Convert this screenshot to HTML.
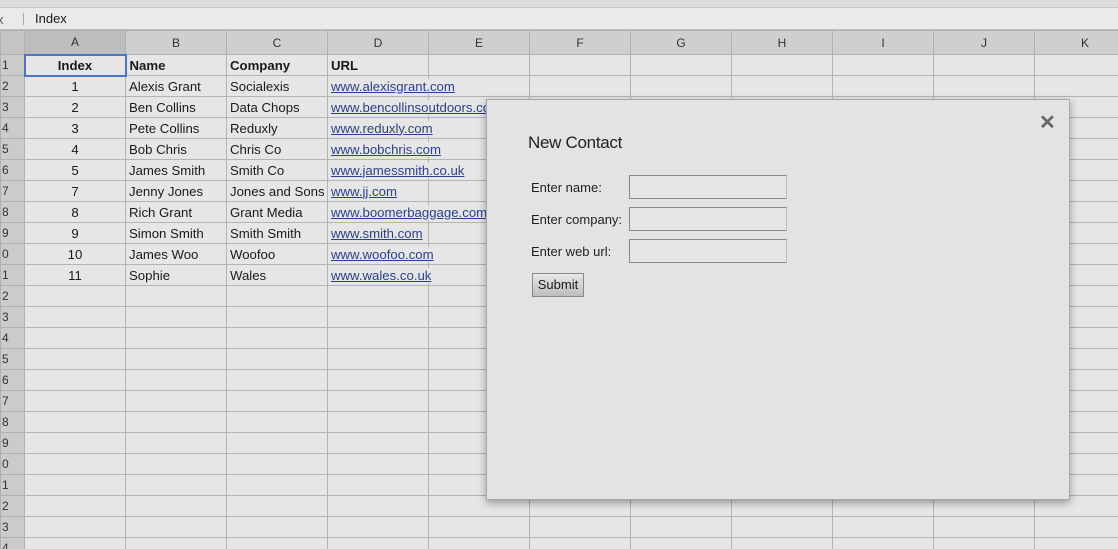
<!DOCTYPE html>
<html><head><meta charset="utf-8"><style>
*{margin:0;padding:0;box-sizing:border-box}
html,body{overflow:hidden}
body{width:1118px;height:549px;background:#e6e6e6;font-family:"Liberation Sans",Arial,sans-serif;font-size:14px;color:#1a1a1a;position:relative}
.tb{position:absolute;left:0;top:0;width:1118px;height:8px;background:#dcdcdc;border-bottom:1px solid #c8c8c8}
.fb{position:absolute;left:0;top:8px;width:1118px;height:22px;background:#eaeaea;border-bottom:1px solid #bdbdbd}
.fb .fx{position:absolute;left:-3px;top:4px;font-size:13px;color:#555}
.fb .sep{position:absolute;left:23px;top:5px;width:1px;height:12px;background:#aaa}
.fb .v{position:absolute;left:35px;top:3px;font-size:13px}
.wrap{position:absolute;left:0;top:30px;width:1118px;height:519px;overflow:hidden}
table{border-collapse:collapse;table-layout:fixed;width:1135px}
td{height:21px;border:1px solid #b4b4b4;padding:0 3px;white-space:nowrap;overflow:hidden;font-size:13.2px}
td.o{overflow:visible}
td.o a{position:relative;z-index:1;background:#e6e6e6;padding-right:2px}
tr.h td{height:24px;background:#cfcfcf;color:#333;text-align:center;font-size:12px;border-color:#b0b0b0}
td.r{background:#cbcbcb;color:#333;font-size:12px;text-align:left;padding:0 0 0 1px;border-color:#b0b0b0}
td.c{text-align:center}
td.b{font-weight:bold}
a{color:#2a3f8f;text-decoration:underline}
td.sel{border:2px solid #4a76c8}
.dlg{position:absolute;left:486px;top:99px;width:584px;height:401px;background:#e3e3e3;border:1px solid #a8a8a8;box-shadow:0 3px 8px rgba(0,0,0,.35);z-index:5}
.dlg .x{position:absolute;left:552px;top:10px;font-size:20px;font-weight:bold;color:#666}
.dlg .t{position:absolute;left:41px;top:33px;font-size:17px;color:#222;letter-spacing:-0.3px}
.dlg .l{position:absolute;left:44px;font-size:13px;color:#222}
.dlg .i{position:absolute;left:142px;width:158px;height:24px;border:1px solid #888;border-right-color:#bbb;background:#e6e6e6}
.dlg .s{position:absolute;left:45px;top:173px;width:52px;height:24px;border:1px solid #888;background:linear-gradient(#e8e8e8,#bdbdbd);font-size:13px;text-align:center;line-height:22px}
</style></head><body>
<div class="tb"></div>
<div class="fb"><span class="fx">x</span><span class="sep"></span><span class="v">Index</span></div>
<div class="wrap">
<table>
<colgroup><col style="width:24px"><col style="width:101px"><col style="width:101px"><col style="width:101px"><col style="width:101px"><col style="width:101px"><col style="width:101px"><col style="width:101px"><col style="width:101px"><col style="width:101px"><col style="width:101px"><col style="width:101px"></colgroup>
<tr class="h"><td style="background:#c4c4c4"></td><td style="background:#bdbdbd">A</td><td>B</td><td>C</td><td>D</td><td>E</td><td>F</td><td>G</td><td>H</td><td>I</td><td>J</td><td>K</td></tr>
<tr><td class="r">1</td><td class="c b sel">Index</td><td class="b">Name</td><td class="b">Company</td><td class="b">URL</td><td></td><td></td><td></td><td></td><td></td><td></td><td></td></tr>
<tr><td class="r">2</td><td class="c">1</td><td>Alexis Grant</td><td>Socialexis</td><td class="o"><a>www.alexisgrant.com</a></td><td></td><td></td><td></td><td></td><td></td><td></td><td></td></tr>
<tr><td class="r">3</td><td class="c">2</td><td>Ben Collins</td><td>Data Chops</td><td class="o"><a>www.bencollinsoutdoors.co</a></td><td></td><td></td><td></td><td></td><td></td><td></td><td></td></tr>
<tr><td class="r">4</td><td class="c">3</td><td>Pete Collins</td><td>Reduxly</td><td class="o"><a>www.reduxly.com</a></td><td></td><td></td><td></td><td></td><td></td><td></td><td></td></tr>
<tr><td class="r">5</td><td class="c">4</td><td>Bob Chris</td><td>Chris Co</td><td class="o"><a>www.bobchris.com</a></td><td></td><td></td><td></td><td></td><td></td><td></td><td></td></tr>
<tr><td class="r">6</td><td class="c">5</td><td>James Smith</td><td>Smith Co</td><td class="o"><a>www.jamessmith.co.uk</a></td><td></td><td></td><td></td><td></td><td></td><td></td><td></td></tr>
<tr><td class="r">7</td><td class="c">7</td><td>Jenny Jones</td><td>Jones and Sons</td><td><a>www.jj.com</a></td><td></td><td></td><td></td><td></td><td></td><td></td><td></td></tr>
<tr><td class="r">8</td><td class="c">8</td><td>Rich Grant</td><td>Grant Media</td><td class="o"><a>www.boomerbaggage.com</a></td><td></td><td></td><td></td><td></td><td></td><td></td><td></td></tr>
<tr><td class="r">9</td><td class="c">9</td><td>Simon Smith</td><td>Smith Smith</td><td><a>www.smith.com</a></td><td></td><td></td><td></td><td></td><td></td><td></td><td></td></tr>
<tr><td class="r">0</td><td class="c">10</td><td>James Woo</td><td>Woofoo</td><td class="o"><a>www.woofoo.com</a></td><td></td><td></td><td></td><td></td><td></td><td></td><td></td></tr>
<tr><td class="r">1</td><td class="c">11</td><td>Sophie</td><td>Wales</td><td class="o"><a>www.wales.co.uk</a></td><td></td><td></td><td></td><td></td><td></td><td></td><td></td></tr>
<tr><td class="r">2</td><td></td><td></td><td></td><td></td><td></td><td></td><td></td><td></td><td></td><td></td><td></td></tr>
<tr><td class="r">3</td><td></td><td></td><td></td><td></td><td></td><td></td><td></td><td></td><td></td><td></td><td></td></tr>
<tr><td class="r">4</td><td></td><td></td><td></td><td></td><td></td><td></td><td></td><td></td><td></td><td></td><td></td></tr>
<tr><td class="r">5</td><td></td><td></td><td></td><td></td><td></td><td></td><td></td><td></td><td></td><td></td><td></td></tr>
<tr><td class="r">6</td><td></td><td></td><td></td><td></td><td></td><td></td><td></td><td></td><td></td><td></td><td></td></tr>
<tr><td class="r">7</td><td></td><td></td><td></td><td></td><td></td><td></td><td></td><td></td><td></td><td></td><td></td></tr>
<tr><td class="r">8</td><td></td><td></td><td></td><td></td><td></td><td></td><td></td><td></td><td></td><td></td><td></td></tr>
<tr><td class="r">9</td><td></td><td></td><td></td><td></td><td></td><td></td><td></td><td></td><td></td><td></td><td></td></tr>
<tr><td class="r">0</td><td></td><td></td><td></td><td></td><td></td><td></td><td></td><td></td><td></td><td></td><td></td></tr>
<tr><td class="r">1</td><td></td><td></td><td></td><td></td><td></td><td></td><td></td><td></td><td></td><td></td><td></td></tr>
<tr><td class="r">2</td><td></td><td></td><td></td><td></td><td></td><td></td><td></td><td></td><td></td><td></td><td></td></tr>
<tr><td class="r">3</td><td></td><td></td><td></td><td></td><td></td><td></td><td></td><td></td><td></td><td></td><td></td></tr>
<tr><td class="r">4</td><td></td><td></td><td></td><td></td><td></td><td></td><td></td><td></td><td></td><td></td><td></td></tr>
</table>
</div>
<div class="dlg">
<div class="x">✕</div>
<div class="t">New Contact</div>
<div class="l" style="top:80px">Enter name:</div><div class="i" style="top:75px"></div>
<div class="l" style="top:112px">Enter company:</div><div class="i" style="top:107px"></div>
<div class="l" style="top:144px">Enter web url:</div><div class="i" style="top:139px"></div>
<div class="s">Submit</div>
</div>
</body></html>
